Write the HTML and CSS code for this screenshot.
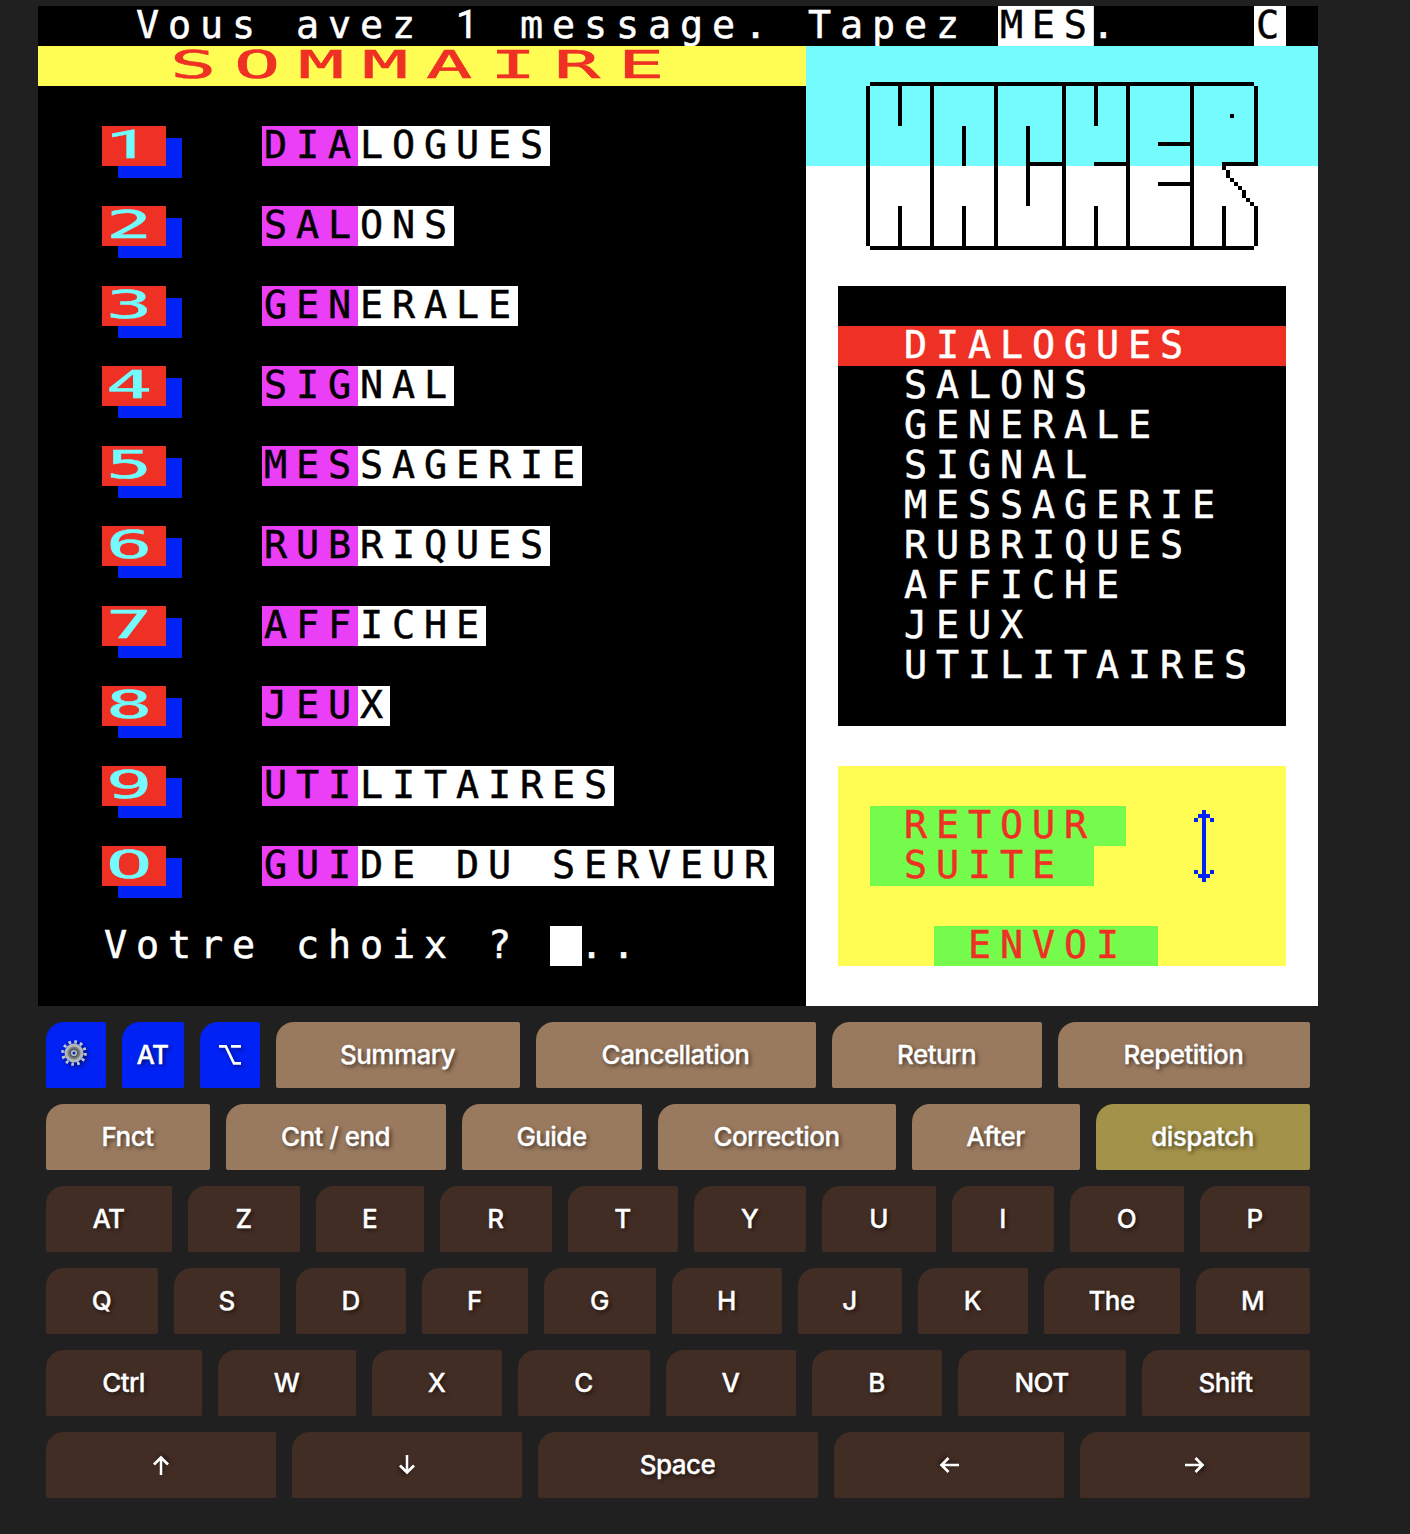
FILE: index.html
```html
<!DOCTYPE html>
<html lang="fr">
<head>
<meta charset="utf-8">
<title>Hacker - Sommaire</title>
<link rel="stylesheet" href="styles.css">
</head>
<body>
<main class="minitel">
  <section class="screen">
    <div class="row status"><span class="run">Vous avez <span class="one">1</span> message. Tapez </span><span class="run inverse">MES</span><span class="run dots">.</span><span class="run inverse connected">C</span></div>
    <div class="page">
      <div class="summary">
        <h1 class="row title"><span class="wide">SOMMAIRE</span></h1>
        <ol class="menu">
          <li class="item"><span class="badge"><span class="wide"><span class="one">1</span></span></span><span class="run code">DIA</span><span class="run inverse">LOGUES</span></li>
          <li class="item"><span class="badge"><span class="wide">2</span></span><span class="run code">SAL</span><span class="run inverse">ONS</span></li>
          <li class="item"><span class="badge"><span class="wide">3</span></span><span class="run code">GEN</span><span class="run inverse">ERALE</span></li>
          <li class="item"><span class="badge"><span class="wide">4</span></span><span class="run code">SIG</span><span class="run inverse">NAL</span></li>
          <li class="item"><span class="badge"><span class="wide">5</span></span><span class="run code">MES</span><span class="run inverse">SAGERIE</span></li>
          <li class="item"><span class="badge"><span class="wide">6</span></span><span class="run code">RUB</span><span class="run inverse">RIQUES</span></li>
          <li class="item"><span class="badge"><span class="wide">7</span></span><span class="run code">AFF</span><span class="run inverse">ICHE</span></li>
          <li class="item"><span class="badge"><span class="wide">8</span></span><span class="run code">JEU</span><span class="run inverse">X</span></li>
          <li class="item"><span class="badge"><span class="wide">9</span></span><span class="run code">UTI</span><span class="run inverse">LITAIRES</span></li>
          <li class="item"><span class="badge"><span class="wide">O</span></span><span class="run code">GUI</span><span class="run inverse">DE DU SERVEUR</span></li>
        </ol>
        <div class="row prompt"><span class="run">Votre choix ? </span><span class="cursor"></span><span class="run dots">..</span></div>
      </div>
      <aside class="side">
        <svg class="logo" viewBox="0 0 98 42" width="392" height="168" shape-rendering="crispEdges" role="img" aria-label="Hacker">
          <path d="M1 0h96v1H1z M1 41h96v1H1z M0 1h1v40H0z M8 1h1v10H8z M8 31h1v10H8z M16 1h1v40h-1z M24 11h1v10h-1z M24 31h1v10h-1z M32 1h1v40h-1z M40 11h1v20h-1z M41 20h8v1h-8z M49 1h1v40h-1z M57 1h1v10h-1z M57 31h1v10h-1z M57 20h8v1h-8z M65 1h1v40h-1z M73 15h8v1h-8z M73 25h8v1h-8z M81 1h1v40h-1z M91 8h1v1h-1z M97 1h1v20h-1z M89 20h8v1h-8z M89 21h1v1h-1z M90 22h1v2h-1z M91 24h1v1h-1z M92 25h1v1h-1z M93 26h1v1h-1z M94 27h1v2h-1z M95 29h1v1h-1z M96 30h1v1h-1z M97 31h1v10h-1z M89 31h1v10h-1z"/>
        </svg>
        <ul class="list">
          <li class="row current">DIALOGUES</li>
          <li class="row">SALONS</li>
          <li class="row">GENERALE</li>
          <li class="row">SIGNAL</li>
          <li class="row">MESSAGERIE</li>
          <li class="row">RUBRIQUES</li>
          <li class="row">AFFICHE</li>
          <li class="row">JEUX</li>
          <li class="row">UTILITAIRES</li>
        </ul>
        <div class="help">
          <div class="moves">
            <div class="tags"><span class="tag">RETOUR</span><span class="tag">SUITE</span></div>
            <svg class="updown" viewBox="0 0 5 18" width="20" height="72" shape-rendering="crispEdges"><path d="M2 0h1v18H2z M1 1h3v1H1z M0 2h1v1H0z M4 2h1v1H4z M1 16h3v1H1z M0 15h1v1H0z M4 15h1v1H4z"/></svg>
          </div>
          <div class="row"><span class="tag send">ENVOI</span></div>
        </div>
      </aside>
    </div>
  </section>
  <section class="keyboard">
    <div class="keys keys-1">
      <button class="key blue" aria-label="Settings"><svg class="gear" viewBox="-13 -13 26 26" width="26" height="26"><circle r="11.2" fill="none" stroke="#c3c8cc" stroke-width="3.2" stroke-dasharray="2.6 3.26"/><circle r="8" fill="#777d82" stroke="#b1b6ba" stroke-width="3"/><circle r="3.8" fill="#b8bec2" stroke="#50565b" stroke-width="1.4"/><circle r="1.5" fill="#0c22c8"/></svg></button>
      <button class="key blue">AT</button>
      <button class="key blue" aria-label="Option"><svg class="option" viewBox="0 0 22 20" width="22" height="20"><path d="M0 1.4h6.8l8.2 17h7M12 1.4h10" fill="none" stroke="#fff" stroke-width="2.6"/></svg></button>
      <button class="key func">Summary</button>
      <button class="key func">Cancellation</button>
      <button class="key func">Return</button>
      <button class="key func">Repetition</button>
    </div>
    <div class="keys keys-2">
      <button class="key func">Fnct</button><button class="key func">Cnt / end</button><button class="key func">Guide</button><button class="key func">Correction</button><button class="key func">After</button><button class="key dispatch">dispatch</button>
    </div>
    <div class="keys keys-3">
      <button class="key">AT</button><button class="key">Z</button><button class="key">E</button><button class="key">R</button><button class="key">T</button><button class="key">Y</button><button class="key">U</button><button class="key">I</button><button class="key">O</button><button class="key">P</button>
    </div>
    <div class="keys keys-4">
      <button class="key">Q</button><button class="key">S</button><button class="key">D</button><button class="key">F</button><button class="key">G</button><button class="key">H</button><button class="key">J</button><button class="key">K</button><button class="key">The</button><button class="key">M</button>
    </div>
    <div class="keys keys-5">
      <button class="key">Ctrl</button><button class="key">W</button><button class="key">X</button><button class="key">C</button><button class="key">V</button><button class="key">B</button><button class="key">NOT</button><button class="key">Shift</button>
    </div>
    <div class="keys keys-6">
      <button class="key" aria-label="Up"><svg class="arrow up" viewBox="0 0 20 18" width="20" height="18"><path d="M0 9h17M10.5 2l7 7-7 7"/></svg></button>
      <button class="key" aria-label="Down"><svg class="arrow down" viewBox="0 0 20 18" width="20" height="18"><path d="M0 9h17M10.5 2l7 7-7 7"/></svg></button>
      <button class="key">Space</button>
      <button class="key" aria-label="Left"><svg class="arrow left" viewBox="0 0 20 18" width="20" height="18"><path d="M0 9h17M10.5 2l7 7-7 7"/></svg></button>
      <button class="key" aria-label="Right"><svg class="arrow" viewBox="0 0 20 18" width="20" height="18"><path d="M0 9h17M10.5 2l7 7-7 7"/></svg></button>
    </div>
  </section>
</main>
</body>
</html>
```
FILE: styles.css
```css
* { box-sizing: border-box; }

body {
  margin: 0;
  min-height: 1534px;
  background: #202020;
}

.minitel {
  width: 1280px;
  margin-left: 38px;
  padding-top: 6px;
}

/* The screen is a grid of 40 x 25 cells, each 32 x 40 px. */
.screen {
  height: 1000px;
  background: #000;
  color: #fff;
  font-family: "DejaVu Sans Mono", monospace;
  font-size: 38.4px;
  line-height: 40px;
  letter-spacing: 8.88px;
  text-rendering: geometricPrecision;
  font-kerning: none;
  -webkit-text-stroke: 0.5px;
}

.row {
  display: flex;
  height: 40px;
}

/* Glyphs sit 2px inside their cell; the clip trims the same 2px at the end. */
.run {
  flex: none;
  height: 40px;
  padding-left: 2px;
  margin-right: -2px;
  clip-path: inset(0 2px 0 0);
  white-space: pre;
}

.dots { text-indent: -4px; }

.one {
  font-family: Roboto, sans-serif;
  font-size: 39.4px;
  letter-spacing: 9.9px;
  line-height: 0;
}

.inverse { background: #fff; color: #000; }
.code { background: #ea3ef7; color: #000; }
.status { padding-left: 96px; }
.connected { margin-left: auto; margin-right: 30px; }

.page { display: flex; height: 960px; }
.summary { width: 768px; }

.title {
  margin: 0;
  padding-left: 128px;
  background: #fffd54;
  color: #ee3124;
  font-size: inherit;
  font-weight: normal;
}

.wide {
  display: block;
  height: 40px;
  text-indent: 2px;
  transform: scaleX(2);
  transform-origin: left;
}

.menu {
  margin: 0;
  padding: 40px 0 0 64px;
  list-style: none;
}

.item {
  display: flex;
  height: 80px;
}

.badge {
  width: 64px;
  height: 40px;
  margin-right: 96px;
  background: #ee3124;
  box-shadow: 16px 12px 0 #0022f5;
  color: #73fbfd;
}

.badge .wide { width: 32px; }

.prompt { padding-left: 64px; }
.cursor { width: 32px; height: 40px; background: #fff; }

.side {
  width: 512px;
  padding: 36px 32px 40px;
  background: linear-gradient(#73fbfd 120px, #fff 120px);
}

.logo { display: block; margin: 0 0 36px 28px; }

.list {
  height: 440px;
  margin: 0 0 40px;
  padding: 40px 0 0;
  background: #000;
  list-style: none;
}

.list .row { padding-left: 66px; }
.current { background: #ee3124; }

.help {
  height: 200px;
  padding: 40px 32px 0;
  background: #fffd54;
}

.moves { display: flex; justify-content: space-between; height: 120px; }
.tags { display: flex; flex-direction: column; align-items: flex-start; }
.tag { height: 40px; padding: 0 30px 0 34px; background: #75fb4c; color: #ee3124; }
.send { margin-left: 64px; }
.updown { margin: 4px 40px 0 0; fill: #0022f5; }

.keyboard {
  display: grid;
  gap: 16px;
  padding: 16px 8px;
}

.keys { display: grid; grid-auto-rows: 66px; gap: 16px; }
.keys-1 { grid-template-columns: 60px 62px 60px 244px 280px 210px 252px; }
.keys-2 { grid-template-columns: 164px 220px 180px 238px 168px 214px; }
.keys-3 { grid-template-columns: 126px 112px 108px 112px 110px 112px 114px 102px 114px 110px; }
.keys-4 { grid-template-columns: 112px 106px 110px 106px 112px 110px 104px 110px 136px 114px; }
.keys-5 { grid-template-columns: 156px 138px 130px 132px 130px 130px 168px 168px; }
.keys-6 { grid-template-columns: 230px 230px 280px 230px 230px; }

.key {
  display: flex;
  align-items: center;
  justify-content: center;
  padding: 0 1px 0 0;
  border: 0;
  border-radius: 18px 2px 2px 2px;
  background: #422d25;
  color: #fff;
  font: 500 26px/66px Inter, sans-serif;
  letter-spacing: -0.55px;
  -webkit-text-stroke: 0.3px;
  text-shadow: 2px 2px 4px rgba(0, 0, 0, 0.6);
}

.func { background: #9a7a5f; }
.dispatch { background: #a39249; }
.blue { background: #0022f5; }

.key svg { filter: drop-shadow(2px 2px 2px rgba(0, 0, 0, 0.5)); }
.gear { margin: 0 4px 4px 0; }
.arrow { fill: none; stroke: #fff; stroke-width: 2.7; }
.up { rotate: -90deg; }
.down { rotate: 90deg; }
.left { rotate: 180deg; }
```
